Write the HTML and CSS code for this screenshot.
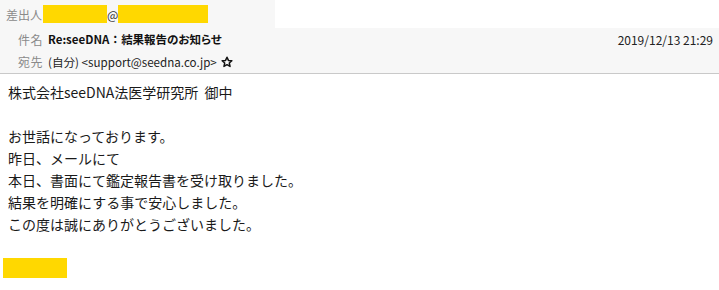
FILE: index.html
```html
<!DOCTYPE html>
<html lang="ja">
<head>
<meta charset="utf-8">
<link rel="stylesheet" href="styles.css">
</head>
<body>
<div class="header">
  <div class="row from">
    <span class="label">差出人</span>
    <span class="mask mask-user"></span>
    <span class="at">@</span>
    <span class="mask mask-domain"></span>
  </div>
  <div class="meta">
    <div class="row subject">
      <span class="label">件名</span>
      <span class="subject-text">Re:seeDNA<span class="colon">：</span>結果報告のお知らせ</span>
      <span class="date">2019/12/13 21:29</span>
    </div>
    <div class="row to">
      <span class="label">宛先</span>
      <span class="to-text">(自分) &lt;support@seedna.co.jp&gt;</span>
      <svg class="star" width="12" height="12" viewBox="0 0 24 24"><path d="M12 2.5l2.9 6.3 6.8.7-5.1 4.6 1.5 6.8L12 17.4l-6.1 3.5 1.5-6.8-5.1-4.6 6.8-.7z" fill="none" stroke="#111" stroke-width="3" stroke-linejoin="round"/></svg>
    </div>
  </div>
</div>
<div class="mail-body">
  <p class="line">株式会社seeDNA法医学研究所&nbsp;&nbsp;御中</p>
  <p class="line">&nbsp;</p>
  <p class="line">お世話になっております。</p>
  <p class="line">昨日、メールにて</p>
  <p class="line">本日、書面にて鑑定報告書を受け取りました。</p>
  <p class="line">結果を明確にする事で安心しました。</p>
  <p class="line">この度は誠にありがとうございました。</p>
  <p class="line">&nbsp;</p>
  <div class="signature"></div>
</div>
</body>
</html>
```

FILE: styles.css
```css
html, body {
  margin: 0;
  padding: 0;
  background: #ffffff;
}

body {
  font-family: "Noto Sans CJK JP", "Noto Sans", sans-serif;
  color: #1a1a1a;
}

.header {
  font-feature-settings: "palt" 1;
}

.row {
  display: flex;
  align-items: center;
}

.label {
  color: #8a8a8a;
  font-size: 12px;
}

.from {
  width: 275px;
  height: 28px;
  background: #f7f7f7;
  padding-left: 6px;
  box-sizing: border-box;
}

.from .label {
  margin-right: 1px;
}

.mask {
  display: inline-block;
  height: 18px;
  background: #ffd800;
}

.mask-user {
  width: 64px;
}

.mask-domain {
  width: 90px;
}

.at {
  font-size: 12px;
  color: #333;
  width: 11px;
  text-align: center;
}

.meta {
  background: #f7f7f7;
  border-bottom: 1px solid #c9c9c9;
  padding: 0 6px 0 18px;
}

.subject {
  height: 22px;
}

.to {
  height: 23px;
}

.meta .label {
  width: 30px;
  flex: none;
  letter-spacing: 0.5px;
}

.subject-text {
  font-size: 11.5px;
  font-weight: bold;
  color: #111;
}

.colon {
  margin: 0 3px;
}

.date {
  margin-left: auto;
  font-size: 12px;
  color: #222;
}

.to-text {
  font-size: 11.6px;
  color: #222;
}

.star {
  margin-left: 4px;
}

.mail-body {
  padding: 7px 0 0 8px;
}

.line {
  margin: 0;
  font-size: 14px;
  line-height: 22px;
  height: 22px;
  color: #1a1a1a;
  white-space: nowrap;
}

.signature {
  width: 64px;
  height: 20px;
  margin-top: 1px;
  margin-left: -5px;
  background: #ffd800;
}
```
